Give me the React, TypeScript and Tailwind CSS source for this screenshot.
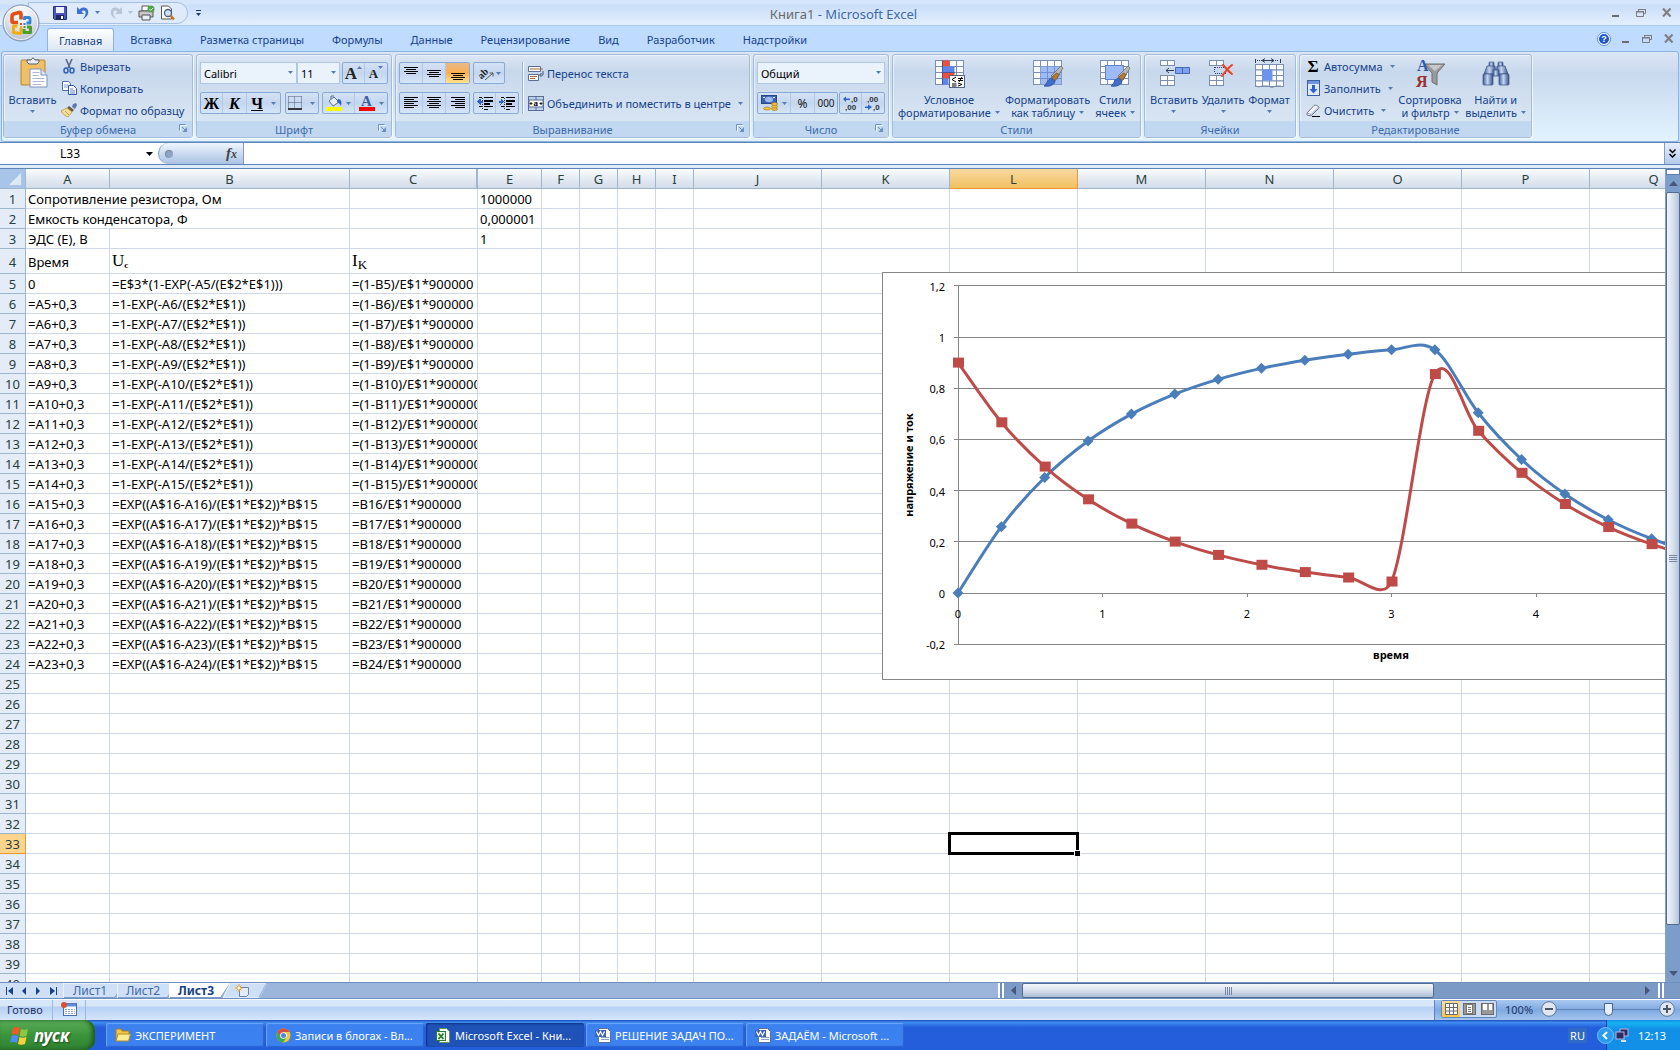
import type { ReactNode } from "react";

const UI = "font-['Noto_Sans',sans-serif]";

/* ---------- small shared pieces ---------- */

function Caret({ className = "" }: { className?: string }) {
  return (
    <svg width="5" height="3" viewBox="0 0 5 3" className={`shrink-0 ${className}`} aria-hidden="true">
      <path d="M0 0h5L2.5 3z" fill="#567db0" />
    </svg>
  );
}

function Brush({ x = 0, y = 0 }: { x?: number; y?: number }) {
  return (
    <g transform={`translate(${x} ${y})`}>
      <path d="M19 0l2 2-7 11-5-3z" fill="#b9b9b9" stroke="#6b6b6b" strokeWidth=".8" />
      <path d="M14.5 7l3 1.5-4 6-4-3z" fill="#b07a3a" stroke="#6f4a1c" strokeWidth=".7" />
      <path d="M9 12l4 3c-1 4-5 6-11 5 3-2 3-6 7-8z" fill="#3f6fc6" stroke="#28509c" strokeWidth=".8" />
    </g>
  );
}

function Cells({ x, y, cols, rows, w, h, stroke = "#7b8fb0" }: { x: number; y: number; cols: number; rows: number; w: number; h: number; stroke?: string }) {
  return (
    <g>
      {Array.from({ length: cols * rows }, (_, i) => (
        <rect key={i} x={x + (i % cols) * w} y={y + Math.floor(i / cols) * h} width={w} height={h} fill="#fbfcff" stroke={stroke} />
      ))}
    </g>
  );
}

/* ---------- icons ---------- */

const OfficeIcon = () => (
  <svg width="38" height="38" viewBox="0 0 38 38" aria-hidden="true">
    <defs>
      <radialGradient id="orb" cx=".5" cy=".25" r=".8">
        <stop offset="0" stopColor="#ffffff" />
        <stop offset=".55" stopColor="#dcdfe6" />
        <stop offset="1" stopColor="#aeb9c9" />
      </radialGradient>
    </defs>
    <circle cx="19" cy="19" r="18" fill="url(#orb)" stroke="#7d93b3" />
    <circle cx="19" cy="19" r="16.5" fill="none" stroke="#fff" strokeOpacity=".7" />
    <g fill="none" strokeLinejoin="round">
      <path d="M16 18.500h-4.500q-1.500 0-1.500-1.500v-5q0-1.500 1.500-2l5.500-1.500q2-.5 2 1.500v5.500" stroke="#e04f14" strokeWidth="3.600" />
      <path d="M22.500 16v-2.500h4q1.500 0 1.500 1.500v4h-3.500" stroke="#2f86d8" strokeWidth="2.800" />
      <path d="M15.500 22h-4v6.500q4 1 7.500.5v-5" stroke="#f2ae10" strokeWidth="3" />
      <path d="M22 25v3.500h6.500V23H25" stroke="#4b9f2f" strokeWidth="3" />
    </g>
    <g>
      <rect x="18" y="19" width="2" height="2" fill="#e04f14" />
      <rect x="21.500" y="19" width="2" height="2" fill="#2f86d8" />
      <rect x="18" y="22" width="2" height="2" fill="#f2ae10" />
      <rect x="21.500" y="22" width="2" height="2" fill="#4b9f2f" />
    </g>
  </svg>
);

const SaveIcon = () => (
  <svg width="14" height="14" viewBox="0 0 14 14" aria-hidden="true">
    <path d="M.5.5h13v13h-12l-1-1z" fill="#4956c0" stroke="#262f85" />
    <rect x="3" y="1" width="8" height="6" fill="#eef2fd" />
    <rect x="3" y="9" width="8" height="5" fill="#1f275f" />
    <rect x="8" y="10" width="2" height="3" fill="#fff" />
  </svg>
);

const UndoIcon = ({ color = "#3c6fd0" }: { color?: string }) => (
  <svg width="14" height="14" viewBox="0 0 14 14" aria-hidden="true">
    <path d="M1 1v7h7L5.500 5.500C8 3.500 10.500 5 9.500 8 9 10 8 11.500 7 13c4-2 6-5 5-8.500C11 1 6.500.5 3.500 3.500z" fill={color} />
  </svg>
);

const PrintIcon = () => (
  <svg width="17" height="16" viewBox="0 0 17 16" aria-hidden="true">
    <path d="M4 1h7v5H4z" fill="#fff" stroke="#555" />
    <path d="M1 6h14v6H1z" fill="#c9c9c9" stroke="#555" />
    <path d="M4 10h8v5H4z" fill="#e9eefb" stroke="#555" />
    <circle cx="13" cy="4" r="3.500" fill="#4fa545" />
    <path d="M11.500 4l1.200 1.300L15 3" fill="none" stroke="#fff" />
  </svg>
);

const PreviewIcon = () => (
  <svg width="15" height="16" viewBox="0 0 15 16" aria-hidden="true">
    <path d="M1.500 1h7l3 3v10h-10z" fill="#fff" stroke="#555" />
    <circle cx="8" cy="8" r="3.500" fill="#cfe3fa" stroke="#4a6288" strokeWidth="1.300" />
    <path d="M10.500 10.500l3.500 4" stroke="#c07a28" strokeWidth="2.500" />
  </svg>
);

const PasteIcon = () => (
  <svg width="32" height="32" viewBox="0 0 32 32" aria-hidden="true">
    <rect x="4" y="3" width="24" height="25" rx="1" fill="#f1bf65" stroke="#b88432" />
    <path d="M10 5V3h4q2-4 4 0h4v2l-2 2h-8z" fill="#e9edf3" stroke="#555e6b" />
    <path d="M13 12h11l6 6v12H13z" fill="#fff" stroke="#7c91b8" />
    <path d="M24 12v6h6" fill="#dce7f8" stroke="#7c91b8" />
    <path d="M15.500 15.500h7M15.500 18.500h6M15.500 21.500h12M15.500 24.500h12M15.500 27.500h9" stroke="#a9b9d6" />
  </svg>
);

const CutIcon = () => (
  <svg width="14" height="15" viewBox="0 0 14 15" aria-hidden="true">
    <path d="M4 0l4 9M10 0L6 9" stroke="#5b6b86" strokeWidth="1.600" />
    <ellipse cx="4" cy="11.500" rx="2" ry="2.500" fill="none" stroke="#2f62b8" strokeWidth="1.500" />
    <ellipse cx="10" cy="11.500" rx="2" ry="2.500" fill="none" stroke="#2f62b8" strokeWidth="1.500" />
  </svg>
);

const CopyIcon = () => (
  <svg width="15" height="14" viewBox="0 0 15 14" aria-hidden="true">
    <path d="M.5.500h6l2 2v7h-8z" fill="#fff" stroke="#4a6fb5" />
    <path d="M2 4h4M2 6h4" stroke="#7f9dd1" />
    <path d="M6.500 4.500h5l3 3v6h-8z" fill="#fff" stroke="#2f5aa8" />
    <path d="M8 8h3M8 10h5M8 12h5" stroke="#5f84c6" />
  </svg>
);

const PainterIcon = () => (
  <svg width="16" height="14" viewBox="0 0 16 14" aria-hidden="true">
    <path d="M12 1l3-1 1 2-2 4-3-2z" fill="#5b78b5" />
    <path d="M8 3l5 4-2 2-5-4z" fill="#6b5a3b" />
    <path d="M6 5l5 4-4 5C4 13 2 11 0 8z" fill="#f3dc96" stroke="#b98d34" strokeWidth=".7" />
    <path d="M4 8l4 4" stroke="#c9a146" />
  </svg>
);

const LaunchIcon = () => (
  <svg width="9" height="9" viewBox="0 0 9 9" aria-hidden="true">
    <path d="M.5 6.500v-6h6" fill="none" stroke="#6b8fc0" />
    <path d="M3 3l3.500 3.500" stroke="#6b8fc0" />
    <path d="M8 3v5H3.500z" fill="#6b8fc0" />
    <path d="M1.500 7.500v-6h6" fill="none" stroke="#fff" strokeOpacity=".8" />
  </svg>
);

const BordersIcon = () => (
  <svg width="14" height="14" viewBox="0 0 14 14" aria-hidden="true">
    <path d="M.5.500h13M.5 6.500h13M.5.500v12M6.500.500v12M13.500.500v12" stroke="#4c5d7b" strokeDasharray="1 1" />
    <path d="M0 13h14" stroke="#000" strokeWidth="1.500" />
  </svg>
);

const FillIcon = () => (
  <svg width="16" height="16" viewBox="0 0 16 16" aria-hidden="true">
    <path d="M3 6l5-4 5 5-6 4z" fill="#e8eef8" stroke="#5a6f96" />
    <path d="M5 4V1h3" fill="none" stroke="#5a6f96" />
    <path d="M12 4c3 0 4 3 3 7-1-2-2-3-4-4z" fill="#2f62b8" />
    <rect y="12" width="16" height="4" fill="#ffff00" />
  </svg>
);

const FontColorIcon = () => (
  <span className="flex flex-col items-center w-4 leading-[12px]">
    <span className="font-['Liberation_Serif',serif] font-bold text-[15px] text-[#3a5f9f]">A</span>
    <span className="w-4 h-1 bg-[#ff0000]" />
  </span>
);

function LinesIcon({ lines }: { lines: [number, number, number][] }) {
  return (
    <svg width="14" height="14" viewBox="0 0 14 14" aria-hidden="true" shapeRendering="crispEdges">
      {lines.map(([x, y, w]) => (
        <rect key={y} x={x} y={y} width={w} height="1" fill="#000" />
      ))}
    </svg>
  );
}

function IndentIcon({ right = false }: { right?: boolean }) {
  return (
    <svg width="16" height="15" viewBox="0 0 16 15" aria-hidden="true" shapeRendering="crispEdges">
      <path d="M7 1h9v1H7zM7 4h9v2H7zM7 7h6v2H7zM7 10h9v1H7zM2 1h3v1H2zM2 10h3v1H2zM7 13h4v1H7z" fill="#000" />
      <path d="M5 2v12" stroke="#333" strokeDasharray="1 1" />
      <path d={right ? "M5 5.500L1.500 2.500v2H0v2h1.500v2z" : "M0 5.500L3.500 2.500v2H6v2H3.500v2z"} fill="#2f62c8" />
    </svg>
  );
}

const OrientIcon = () => (
  <svg width="16" height="15" viewBox="0 0 16 15" aria-hidden="true">
    <text x="0" y="11" transform="rotate(-45 5 8)" fontFamily="Liberation Serif" fontWeight="bold" fontSize="10" fill="#222">ab</text>
    <path d="M7 14l8-7M11.500 7H15v3.500" fill="none" stroke="#555" />
  </svg>
);

const WrapIcon = () => (
  <svg width="16" height="15" viewBox="0 0 16 15" aria-hidden="true">
    <path d="M.5.500h12v5H.5zM.5 8.500h10v6H.5z" fill="#fff" stroke="#5b6f93" />
    <path d="M2 3h13M2 10.500h7M2 12.500h5" stroke="#a5683c" />
    <path d="M15 5v4h-3M13.500 7l-2 2 2 2" fill="none" stroke="#40587f" />
  </svg>
);

const MergeIcon = () => (
  <svg width="16" height="15" viewBox="0 0 16 15" aria-hidden="true">
    <rect x=".5" y=".5" width="15" height="14" fill="#bcd0ef" stroke="#5b6f93" />
    <path d="M8 0v4M8 11v4" stroke="#5b6f93" />
    <rect x="1" y="4" width="14" height="7" fill="#fff" stroke="#5b6f93" />
    <path d="M1.500 7.500h3M3 6v3M11.500 7.500h3M13 6v3" stroke="#222" />
    <text x="5.500" y="10" fontFamily="Liberation Serif" fontWeight="bold" fontSize="9">a</text>
  </svg>
);

const MoneyIcon = () => (
  <svg width="17" height="16" viewBox="0 0 17 16" aria-hidden="true">
    <rect x=".5" y=".5" width="15" height="8" fill="#3d63b8" stroke="#24448c" />
    <ellipse cx="8" cy="4.500" rx="4" ry="2.700" fill="#9db8ea" />
    <path d="M2 2.500h2M12 2.500h2" stroke="#fff" />
    <g fill="#f1c13a" stroke="#a0741a" strokeWidth=".6">
      <ellipse cx="13.500" cy="14" rx="3" ry="1.500" />
      <ellipse cx="13.500" cy="11.500" rx="3" ry="1.500" />
      <ellipse cx="13.500" cy="9" rx="3" ry="1.500" />
      <ellipse cx="6" cy="13.500" rx="3.500" ry="1.500" />
    </g>
  </svg>
);

function DecimalIcon({ less = false }: { less?: boolean }) {
  return (
    <svg width="18" height="18" viewBox="0 0 18 18" aria-hidden="true" fontFamily="Liberation Sans" fontSize="8" fontWeight="bold" fill="#333">
      <text x={less ? 3 : 9} y="8">{less ? ",00" : ",0"}</text>
      <text x={less ? 9 : 3} y="16">{less ? ",0" : ",00"}</text>
      <path d={less ? "M8 13l-4-2.500v2H1v1.500h3v2z" : "M1 5l3-2.500v2h4V6H4v2z"} fill="#2f62c8" />
    </svg>
  );
}

const CondFormatIcon = () => (
  <svg width="32" height="32" viewBox="0 0 32 32" aria-hidden="true">
    <Cells x={2.5} y={3.5} cols={4} rows={4} w={7} h={6} />
    <path d="M9.500 3.500h7v6h-7zM9.500 15.500h12v6h-12z" fill="#ee4f37" />
    <path d="M9.500 9.500h12v6h-12zM9.500 21.500h6v6h-6z" fill="#5d86ea" />
    <path d="M9.500 3.500v24M9.500 15.500h12" stroke="#3b4f8a" strokeWidth=".8" />
    <rect x="16.500" y="18.500" width="15" height="12" fill="#fff" stroke="#556480" />
    <path d="M23 20l-4 2.500 4 2.500M19 27h4.500M19 29h4.500M25 21.500h5M25 23.500h5M29 20l-3 5M25 26l4 1.500-4 1.500" fill="none" stroke="#000" />
  </svg>
);

const FormatTableIcon = () => (
  <svg width="32" height="32" viewBox="0 0 32 32" aria-hidden="true">
    <Cells x={1.5} y={3.5} cols={4} rows={4} w={7} h={6} />
    <rect x="8.500" y="9.500" width="21" height="18" fill="#8fb0f4" fillOpacity=".85" />
    <path d="M8.500 15.500h21M8.500 21.500h21M15.500 9.500v18M22.500 9.500v18" stroke="#6c8fdc" />
    <Brush x={10} y={9} />
  </svg>
);

const CellStylesIcon = () => (
  <svg width="32" height="32" viewBox="0 0 32 32" aria-hidden="true">
    <Cells x={1.5} y={3.5} cols={4} rows={4} w={7} h={6} />
    <rect x="6.500" y="8.500" width="18" height="14" fill="#9dbbf6" stroke="#5f82cf" />
    <Brush x={10} y={9} />
  </svg>
);

const InsertCellsIcon = () => (
  <svg width="32" height="32" viewBox="0 0 32 32" aria-hidden="true">
    <Cells x={2.5} y={3.5} cols={2} rows={1} w={7} h={5} />
    <Cells x={2.5} y={18.5} cols={2} rows={2} w={7} h={5} />
    <path d="M17.500 10.500h14v6h-14zM24.500 10.500v6" fill="#7fa2f0" stroke="#4568b8" />
    <path d="M16 13.500H8M11 11l-3 2.500 3 2.500" fill="none" stroke="#333e55" />
  </svg>
);

const DeleteCellsIcon = () => (
  <svg width="32" height="32" viewBox="0 0 32 32" aria-hidden="true">
    <Cells x={2.5} y={3.5} cols={2} rows={1} w={7} h={5} />
    <Cells x={2.5} y={18.5} cols={2} rows={2} w={7} h={5} />
    <path d="M8 10.500h12M8 16.500h12M7.500 10v6" stroke="#2d3f78" strokeDasharray="1 1" fill="none" />
    <path d="M16 8c3 3 6 7 9 9M25 8c-4 3-7 7-10 11" stroke="#ef3f20" strokeWidth="2" fill="none" strokeLinecap="round" />
  </svg>
);

const FormatCellsIcon = () => (
  <svg width="32" height="32" viewBox="0 0 32 32" aria-hidden="true">
    <path d="M2.500 2v4M27.500 2v4" stroke="#333e55" />
    <path d="M4 3.500h22" stroke="#333e55" strokeDasharray="1 1" />
    <path d="M10 3.500h10M12 1.500l-3 2 3 2M18 1.500l3 2-3 2" fill="none" stroke="#333e55" />
    <Cells x={2.5} y={7.500} cols={4} rows={4} w={7} h={5.500} />
    <rect x="9.500" y="12.500" width="10" height="11" fill="#6a94f0" />
    <path d="M3 29q3 2 6 0h6q4 3 8 0h5" fill="none" stroke="#7b8fb0" />
  </svg>
);

const FillDownIcon = () => (
  <svg width="13" height="16" viewBox="0 0 13 16" aria-hidden="true">
    <rect x=".5" y=".5" width="12" height="15" fill="#dfe9fb" stroke="#3c5f9f" />
    <rect x="1" y="1" width="11" height="3" fill="#6d95e0" />
    <path d="M5 5h3v4h2.500L6.500 13.500 2.500 9H5z" fill="#2c62cf" />
  </svg>
);

const EraserIcon = () => (
  <svg width="15" height="13" viewBox="0 0 15 13" aria-hidden="true">
    <path d="M1 9L8 1.500q1-1 2.500 0l2 1q1 1 0 2L6 11q-1 1-3 .5l-2-.5z" fill="#f3f5fa" stroke="#6c7790" />
    <path d="M1 9l4 1.500 7-7" fill="none" stroke="#9aa6bd" />
    <path d="M6 12.500h8" stroke="#000" />
  </svg>
);

const SortIcon = () => (
  <svg width="32" height="32" viewBox="0 0 32 32" aria-hidden="true" fontFamily="Liberation Serif" fontWeight="bold">
    <path d="M10 7h21l-8 9v12l-5-3V16z" fill="#9b9b9b" stroke="#6e6e6e" />
    <path d="M14 8h14l-7 6z" fill="#c9c9c9" />
    <text x="3" y="14" fontSize="16" fill="#2f58b0">А</text>
    <text x="2" y="30" fontSize="16" fill="#9b2f2a">Я</text>
  </svg>
);

const FindIcon = () => (
  <svg width="32" height="32" viewBox="0 0 32 32" aria-hidden="true">
    <defs>
      <linearGradient id="lens" x2="1">
        <stop offset="0" stopColor="#3f5f9c" />
        <stop offset=".45" stopColor="#c5d5f0" />
        <stop offset="1" stopColor="#35518b" />
      </linearGradient>
    </defs>
    <g fill="url(#lens)" stroke="#34507f" strokeWidth=".7">
      <rect x="9" y="5" width="5" height="5" rx="1" />
      <rect x="18" y="5" width="5" height="5" rx="1" />
      <path d="M7 9h8l1 8H4z" />
      <path d="M17 9h8l3 8H16z" />
      <rect x="3" y="17" width="10" height="11" rx="1" />
      <rect x="19" y="17" width="10" height="11" rx="1" />
      <rect x="13" y="13" width="6" height="6" />
    </g>
  </svg>
);

/* ---------- ribbon parts ---------- */

function Group({ title, className, launcher = false, children }: { title: string; className: string; launcher?: boolean; children: ReactNode }) {
  return (
    <section className={`flex flex-col shrink-0 rounded-[3px] border border-[#a3bcdb] shadow-[1px_1px_0_#ffffffb0,inset_1px_1px_0_#ffffff80] bg-linear-to-b from-[#dce6f4] from-0% via-[#c8d8ec] via-20% to-[#dde9f5] ${className}`}>
      <div className="flex-1">{children}</div>
      <div className="relative flex items-center justify-center h-4 bg-[#c1d8f0] text-[#3e6aaa]">
        {title}
        {launcher && (
          <button type="button" aria-label={title} className="absolute right-1 top-[3px]">
            <LaunchIcon />
          </button>
        )}
      </div>
    </section>
  );
}

function BigButton({ icon, lines, caret = "below", className = "" }: { icon: ReactNode; lines: string[]; caret?: "below" | "inline"; className?: string }) {
  return (
    <button type="button" className={`flex flex-col items-center shrink-0 pt-[2px] leading-[13px] whitespace-nowrap ${className}`}>
      {icon}
      <span className="pt-1">{lines[0]}</span>
      {caret === "below" ? (
        <Caret className="mt-1" />
      ) : (
        <span className="flex items-center gap-1">
          {lines[1]}
          <Caret />
        </span>
      )}
    </button>
  );
}

function SmallButton({ icon, label, caret = false }: { icon: ReactNode; label: string; caret?: boolean }) {
  return (
    <button type="button" className="flex items-center h-[22px] gap-[3px] whitespace-nowrap">
      <span className="flex justify-center w-4">{icon}</span>
      {label}
      {caret && <Caret className="ml-1" />}
    </button>
  );
}

function Strip({ children }: { children: ReactNode }) {
  return (
    <div className="flex h-[22px] rounded-[2px] border border-[#8aaad6] bg-linear-to-b from-[#d5e2f4] via-[#c3d6ef] to-[#d6e5f8] divide-x divide-[#b4c8e4]">
      {children}
    </div>
  );
}

function StripButton({ className = "w-[23px]", label, children }: { className?: string; label: string; children: ReactNode }) {
  return (
    <button type="button" aria-label={label} className={`flex items-center justify-center gap-1 ${className}`}>
      {children}
    </button>
  );
}

function Combo({ label, value, className }: { label: string; value: string; className: string }) {
  return (
    <div className={`relative h-[22px] ${className}`}>
      <select aria-label={label} className="w-full h-full appearance-none bg-[#eaf2fb] border border-[#b0c7e3] pl-[3px] text-black text-[11px]">
        <option>{value}</option>
      </select>
      <Caret className="absolute right-1 top-[9px] pointer-events-none" />
    </div>
  );
}

function Ribbon() {
  return (
    <div className="flex gap-[3px] mx-px pl-px pt-[2px] pb-[3px] h-[91px] rounded-[3px] border border-[#8db2e3] bg-linear-to-b from-[#dbe6f4] via-[#c9d9ee] via-25% to-[#e2f3ff] text-[#15428b]">
      <Group title="Буфер обмена" className="w-[190px]" launcher>
        <div className="flex">
          <BigButton icon={<PasteIcon />} lines={["Вставить"]} className="w-[57px]" />
          <div className="flex flex-col">
            <SmallButton icon={<CutIcon />} label="Вырезать" />
            <SmallButton icon={<CopyIcon />} label="Копировать" />
            <SmallButton icon={<PainterIcon />} label="Формат по образцу" />
          </div>
        </div>
      </Group>

      <Group title="Шрифт" className="w-[196px]" launcher>
        <div className="flex flex-col gap-2 px-[3px] pt-[7px]">
          <div className="flex">
            <Combo label="Шрифт" value="Calibri" className="w-[97px]" />
            <Combo label="Размер" value="11" className="w-[43px]" />
            <div className="ml-auto font-['Liberation_Serif',serif] font-bold text-[#222]">
              <Strip>
                <StripButton label="Увеличить размер" className="w-[22px] text-[17px]">
                  <span>A</span>
                  <Caret className="rotate-180 -ml-1 mb-3" />
                </StripButton>
                <StripButton label="Уменьшить размер" className="w-[22px] text-[13px]">
                  <span>A</span>
                  <Caret className="-ml-1 mb-3" />
                </StripButton>
              </Strip>
            </div>
          </div>
          <div className="flex justify-between font-['Liberation_Serif',serif] text-[16px] font-bold text-black">
            <Strip>
              <StripButton label="Полужирный" className="w-[22px]">Ж</StripButton>
              <StripButton label="Курсив" className="w-6 italic">К</StripButton>
              <StripButton label="Подчеркнутый" className="w-[33px] gap-2">
                <span className="underline">Ч</span>
                <Caret />
              </StripButton>
            </Strip>
            <Strip>
              <StripButton label="Границы" className="w-8 gap-2">
                <BordersIcon />
                <Caret />
              </StripButton>
            </Strip>
            <Strip>
              <StripButton label="Цвет заливки" className="w-8">
                <FillIcon />
                <Caret />
              </StripButton>
              <StripButton label="Цвет текста" className="w-8">
                <FontColorIcon />
                <Caret />
              </StripButton>
            </Strip>
          </div>
        </div>
      </Group>

      <Group title="Выравнивание" className="w-[355px]" launcher>
        <div className="flex px-[3px] pt-[7px]">
          <div className="flex flex-col gap-2 pr-[3px]">
            <div className="flex gap-[3px]">
              <Strip>
                <StripButton label="По верхнему краю"><LinesIcon lines={[[0, 1, 14], [2, 3, 10], [0, 5, 14], [2, 7, 10]]} /></StripButton>
                <StripButton label="По середине"><LinesIcon lines={[[0, 4, 14], [2, 6, 10], [0, 8, 14], [2, 10, 10]]} /></StripButton>
                <StripButton label="По нижнему краю" className="w-[23px] bg-linear-to-b from-[#e9b987] via-[#fdae4b] to-[#ffe48c]"><LinesIcon lines={[[0, 7, 14], [2, 9, 10], [0, 11, 14], [2, 13, 10]]} /></StripButton>
              </Strip>
              <Strip>
                <StripButton label="Ориентация" className="w-[30px] gap-[2px]">
                  <OrientIcon />
                  <Caret />
                </StripButton>
              </Strip>
            </div>
            <div className="flex gap-[3px]">
              <Strip>
                <StripButton label="По левому краю"><LinesIcon lines={[[0, 1, 14], [0, 3, 10], [0, 5, 14], [0, 7, 10], [0, 9, 14], [0, 11, 10]]} /></StripButton>
                <StripButton label="По центру"><LinesIcon lines={[[0, 1, 14], [2, 3, 10], [0, 5, 14], [2, 7, 10], [0, 9, 14], [2, 11, 10]]} /></StripButton>
                <StripButton label="По правому краю"><LinesIcon lines={[[0, 1, 14], [4, 3, 10], [0, 5, 14], [4, 7, 10], [0, 9, 14], [4, 11, 10]]} /></StripButton>
              </Strip>
              <Strip>
                <StripButton label="Уменьшить отступ" className="w-[22px]"><IndentIcon /></StripButton>
                <StripButton label="Увеличить отступ" className="w-[22px]"><IndentIcon right /></StripButton>
              </Strip>
            </div>
          </div>
          <div className="flex flex-col gap-2 border-l border-[#9ab5d8] pl-[5px] shadow-[inset_1px_0_0_#fff]">
            <SmallButton icon={<WrapIcon />} label="Перенос текста" />
            <SmallButton icon={<MergeIcon />} label="Объединить и поместить в центре" caret />
          </div>
        </div>
      </Group>

      <Group title="Число" className="w-[136px]" launcher>
        <div className="flex flex-col gap-2 px-[3px] pt-[7px]">
          <Combo label="Числовой формат" value="Общий" className="w-full" />
          <div className="flex justify-between">
            <Strip>
              <StripButton label="Финансовый формат" className="w-[33px]">
                <MoneyIcon />
                <Caret />
              </StripButton>
              <StripButton label="Процентный формат" className="w-6 text-[12px] text-[#222]">%</StripButton>
              <StripButton label="Формат с разделителями" className="w-[22px] text-[10px] text-[#222]">000</StripButton>
            </Strip>
            <Strip>
              <StripButton label="Увеличить разрядность" className="w-[22px]"><DecimalIcon /></StripButton>
              <StripButton label="Уменьшить разрядность" className="w-[22px]"><DecimalIcon less /></StripButton>
            </Strip>
          </div>
        </div>
      </Group>

      <Group title="Стили" className="w-[249px]">
        <div className="flex justify-between px-[5px]">
          <BigButton icon={<CondFormatIcon />} lines={["Условное", "форматирование"]} caret="inline" />
          <BigButton icon={<FormatTableIcon />} lines={["Форматировать", "как таблицу"]} caret="inline" />
          <BigButton icon={<CellStylesIcon />} lines={["Стили", "ячеек"]} caret="inline" />
        </div>
      </Group>

      <Group title="Ячейки" className="w-[152px]">
        <div className="flex justify-between px-[5px]">
          <BigButton icon={<InsertCellsIcon />} lines={["Вставить"]} />
          <BigButton icon={<DeleteCellsIcon />} lines={["Удалить"]} />
          <BigButton icon={<FormatCellsIcon />} lines={["Формат"]} />
        </div>
      </Group>

      <Group title="Редактирование" className="w-[233px]">
        <div className="flex justify-between px-[5px]">
          <div className="flex flex-col">
            <SmallButton icon={<span className="font-['Liberation_Serif',serif] font-bold text-[17px] text-black">Σ</span>} label="Автосумма" caret />
            <SmallButton icon={<FillDownIcon />} label="Заполнить" caret />
            <SmallButton icon={<EraserIcon />} label="Очистить" caret />
          </div>
          <BigButton icon={<SortIcon />} lines={["Сортировка", "и фильтр"]} caret="inline" />
          <BigButton icon={<FindIcon />} lines={["Найти и", "выделить"]} caret="inline" />
        </div>
      </Group>
    </div>
  );
}

function WindowButtons({ className }: { className: string }) {
  return (
    <div className={`flex items-center ${className}`}>
      <button type="button" aria-label="Свернуть">
        <svg width="9" height="9" viewBox="0 0 9 9"><path d="M1 7h7v2H1z" fill="#6c6c70" /></svg>
      </button>
      <button type="button" aria-label="Восстановить">
        <svg width="10" height="9" viewBox="0 0 10 9"><path d="M2.500 3V1.500h7v4H8M.5 3.500h7v5h-7z" fill="none" stroke="#7b7b80" /><path d="M0 3h8v1.500H0zM2 1h8v1H2z" fill="#7b7b80" /></svg>
      </button>
      <button type="button" aria-label="Закрыть">
        <svg width="10" height="9" viewBox="0 0 10 9"><path d="M1 .5l7.500 8M8.500.5l-7.500 8" stroke="#808085" strokeWidth="2.200" /></svg>
      </button>
    </div>
  );
}

const ribbonTabs = ["Главная", "Вставка", "Разметка страницы", "Формулы", "Данные", "Рецензирование", "Вид", "Разработчик", "Надстройки"];

function Header() {
  return (
    <header className="relative">
      <div className="flex items-center h-[26px] border-b border-[#a9cdee] bg-linear-to-b from-[#d5e5fa] from-15% via-[#cadefa] via-20% to-[#e3effd]">
        <div className="flex items-center gap-[5px] h-[22px] ml-7 pl-6 pr-3 rounded-r-full border border-[#a6c1e4] bg-[#dfeafa]">
          <button type="button" aria-label="Сохранить"><SaveIcon /></button>
          <button type="button" aria-label="Отменить" className="flex items-center gap-[5px] ml-1"><UndoIcon /><Caret /></button>
          <button type="button" aria-label="Вернуть" className="flex items-center gap-[5px] ml-1 opacity-70"><span className="-scale-x-100"><UndoIcon color="#a9b4c6" /></span><Caret className="opacity-50" /></button>
          <button type="button" aria-label="Печать"><PrintIcon /></button>
          <button type="button" aria-label="Предварительный просмотр"><PreviewIcon /></button>
        </div>
        <button type="button" aria-label="Настройка панели" className="ml-2">
          <svg width="5" height="6" viewBox="0 0 5 6"><path d="M0 0h5v1H0zM0 3h5L2.500 6z" fill="#1e3d78" /></svg>
        </button>
        <h1 className="flex-1 pt-[3px] text-center text-[13px] text-[#3e6aaa]">
          <span className="text-[#696969]">Книга1</span> - Microsoft Excel
        </h1>
        <div className="w-[194px]"><WindowButtons className="justify-end gap-4 pr-2" /></div>
      </div>
      <nav className="flex items-end h-[25px] bg-[#bfdbff] pl-[47px]">
        <div className="flex gap-1 text-[#15428b]">
          {ribbonTabs.map((t, i) => (
            <button
              key={t}
              type="button"
              className={i === 0 ? "h-[23px] px-[11px] rounded-t-[3px] border border-b-0 border-[#8db2e3] bg-linear-to-b from-[#ffffff] to-[#dbe6f4]" : "h-[23px] px-3"}
            >
              {t}
            </button>
          ))}
        </div>
        <div className="flex items-center gap-[10px] ml-auto h-full">
          <button type="button" aria-label="Справка">
            <svg width="14" height="14" viewBox="0 0 14 14">
              <circle cx="7" cy="7" r="6.500" fill="#fff" stroke="#5f8ad0" />
              <circle cx="7" cy="7" r="5" fill="#1c56c8" />
              <text x="7" y="10" textAnchor="middle" fontFamily="Liberation Sans" fontWeight="bold" fontSize="9" fill="#fff">?</text>
            </svg>
          </button>
          <WindowButtons className="gap-3 pr-[6px]" />
        </div>
      </nav>
      <button type="button" aria-label="Кнопка Office" className="absolute left-[2px] top-1">
        <OfficeIcon />
      </button>
    </header>
  );
}

function FormulaBar() {
  return (
    <div className="flex h-[23px] border-y border-[#5f86b6] bg-white text-[12px]">
      <div className="relative flex w-[158px]">
        <input aria-label="Имя ячейки" defaultValue="L33" className="w-full text-center pr-[18px] text-black" />
        <svg width="7" height="4" viewBox="0 0 7 4" className="absolute right-[5px] top-[9px]" aria-hidden="true"><path d="M0 0h7L3.500 4z" /></svg>
      </div>
      <div className="flex items-center justify-between w-[86px] px-[6px] rounded-l-full border-l border-r border-[#7d9cc8] bg-linear-to-b from-[#eff5fd] to-[#a9c2e4]">
        <span className="size-2 rounded-full bg-[#8fa4c4] border-t border-l border-[#75879f]" />
        <button type="button" className="font-['Liberation_Serif',serif] font-bold italic text-[15px] leading-[18px] text-[#444]">
          f<span className="text-[12px]">x</span>
        </button>
      </div>
      <input aria-label="Строка формул" className="flex-1 px-1" />
      <button type="button" aria-label="Развернуть" className="flex items-center justify-center w-4 border-l border-[#7d9cc8] bg-linear-to-b from-[#e6effb] to-[#b4cbea]">
        <svg width="7" height="9" viewBox="0 0 7 9"><path d="M.5.500l3 3 3-3M.5 5l3 3 3-3" fill="none" stroke="#000" strokeWidth="1.500" /></svg>
      </button>
    </div>
  );
}

/* ---------- sheet ---------- */

const columns: [string, number][] = [
  ["A", 84], ["B", 240], ["C", 128], ["E", 64], ["F", 38], ["G", 38], ["H", 38], ["I", 38],
  ["J", 128], ["K", 128], ["L", 128], ["M", 128], ["N", 128], ["O", 128], ["P", 128], ["Q", 128],
];

function cellValue(col: string, row: number): ReactNode {
  if (col === "E") return ["1000000", "0,000001", "1"][row - 1];
  if (row === 1 && col === "A") return "Сопротивление резистора, Ом";
  if (row === 2 && col === "A") return "Емкость конденсатора, Ф";
  if (row === 3 && col === "A") return "ЭДС (Е), В";
  if (row === 4) {
    if (col === "A") return "Время";
    if (col === "B") return <span className="font-['Liberation_Serif',serif] text-[17px] leading-[16px]">U<sub className="text-[9px] font-bold">c</sub></span>;
    if (col === "C") return <span className="font-['Liberation_Serif',serif] text-[17px] leading-[16px]">I<sub className="text-[13px]">K</sub></span>;
  }
  if (row < 5 || row > 24) return null;
  if (col === "A") return row === 5 ? "0" : `=A${row - 1}+0,3`;
  if (col === "B") {
    if (row === 5) return "=E$3*(1-EXP(-A5/(E$2*E$1)))";
    return row < 16 ? `=1-EXP(-A${row}/(E$2*E$1))` : `=EXP((A$16-A${row})/(E$1*E$2))*B$15`;
  }
  if (col === "C") return row < 16 ? `=(1-B${row})/E$1*900000` : `=B${row}/E$1*900000`;
  return null;
}

function Grid() {
  return (
    <table className="table-fixed border-separate border-spacing-0 w-[1718px] text-[13px] leading-[17px] text-black">
      <colgroup>
        <col className="w-[26px]" />
        {columns.map(([name, w]) => (
          <col key={name} style={{ width: w }} />
        ))}
      </colgroup>
      <thead>
        <tr className="text-[#27413e]">
          <th className="h-5 p-0 border-r border-b border-[#9eb6ce] bg-[#a9c4e9]">
            <svg width="25" height="19" viewBox="0 0 25 19" aria-hidden="true"><path d="M21 4v12H9z" fill="#dfe9f5" /></svg>
          </th>
          {columns.map(([name]) => (
            <th
              key={name}
              className={
                name === "L"
                  ? "h-5 p-0 pt-[2px] font-normal border-r border-b border-[#f29536] bg-linear-to-b from-[#f9d99f] to-[#f1c15f]"
                  : name === "C"
                    ? "h-5 p-0 pt-[2px] font-normal border-r-2 border-b border-[#9eb6ce] bg-linear-to-b from-[#f9fcfd] to-[#d3dbe9]"
                    : "h-5 p-0 pt-[2px] font-normal border-r border-b border-[#9eb6ce] bg-linear-to-b from-[#f9fcfd] to-[#d3dbe9]"
              }
            >
              {name}
            </th>
          ))}
        </tr>
      </thead>
      <tbody>
        {Array.from({ length: 40 }, (_, i) => i + 1).map((row) => (
          <tr key={row} className={row === 4 ? "h-[25px]" : "h-5"}>
            <th className={`p-0 pt-[2px] font-normal border-r border-b text-[#27413e] ${row === 33 ? "bg-[#ffd58d] border-[#f29536]" : "bg-[#e4ecf7] border-[#9eb6ce]"}`}>{row}</th>
            {columns.map(([name]) => {
              if (row < 3 && name === "B") return null;
              const active = row === 33 && name === "L";
              return (
                <td
                  key={name}
                  colSpan={row < 3 && name === "A" ? 2 : 1}
                  className={`p-0 pl-[2px] border-r border-b border-[#d0d7e5] whitespace-nowrap ${row === 4 && name !== "A" ? "pt-0" : "pt-[2px]"} ${active ? "relative" : "overflow-hidden"}`}
                >
                  {cellValue(name, row)}
                  {active && (
                    <>
                      <span className="absolute -inset-[2px] border-[3px] border-black" />
                      <span className="absolute -right-1 -bottom-1 size-[7px] bg-black border border-white" />
                    </>
                  )}
                </td>
              );
            })}
          </tr>
        ))}
      </tbody>
    </table>
  );
}

/* ---------- chart ---------- */

type Pt = [number, number];

const px = (t: number) => 76 + t * 144.5;
const py = (v: number) => 321 - v * 256;

const charge: number[] = [];
const current: number[] = [];
for (let n = 0; n <= 18; n++) {
  const full = 1 - Math.exp(-3);
  const u = n <= 10 ? 1 - Math.exp(-0.3 * n) : full * Math.exp(-0.3 * (n - 11));
  charge.push(u);
  current.push(0.9 * (n <= 10 ? 1 - u : u));
}

const toPoints = (values: number[]): Pt[] => values.map((v, n) => [px(n * 0.3), py(v)]);

// smoothed line, handles never longer than half of the segment
function smooth(p: Pt[]) {
  const dist = (a: Pt, b: Pt) => Math.hypot(b[0] - a[0], b[1] - a[1]);
  let d = `M${p[0][0]} ${p[0][1]}`;
  for (let i = 0; i < p.length - 1; i++) {
    const a = p[Math.max(i - 1, 0)];
    const b = p[i];
    const c = p[i + 1];
    const e = p[Math.min(i + 2, p.length - 1)];
    const seg = dist(b, c);
    const k1 = Math.min(1 / 6, seg / 2 / dist(a, c));
    const k2 = Math.min(1 / 6, seg / 2 / dist(b, e));
    d += `C${b[0] + (c[0] - a[0]) * k1} ${b[1] + (c[1] - a[1]) * k1} ${c[0] - (e[0] - b[0]) * k2} ${c[1] - (e[1] - b[1]) * k2} ${c[0]} ${c[1]}`;
  }
  return d;
}

function Chart() {
  const blue = toPoints(charge);
  const red = toPoints(current);
  return (
    <svg width="900" height="408" viewBox="0 0 900 408" className="absolute left-[882px] top-[103px]" fontFamily="Noto Sans, sans-serif" fontSize="11" role="img" aria-label="напряжение и ток">
      <rect x=".5" y=".5" width="1000" height="407" fill="#fff" stroke="#868686" />
      <g stroke="#868686" shapeRendering="crispEdges">
        {[1.2, 1, 0.8, 0.6, 0.4, 0.2, 0, -0.2].map((v) => (
          <line key={v} x1="72" x2="900" y1={py(v)} y2={py(v)} />
        ))}
        <line x1="76.500" x2="76.500" y1={py(1.2)} y2={py(-0.2)} />
        {[0, 1, 2, 3, 4].map((t) => (
          <line key={t} x1={px(t)} x2={px(t)} y1={py(0)} y2={py(0) + 4} />
        ))}
      </g>
      {["1,2", "1", "0,8", "0,6", "0,4", "0,2", "0", "-0,2"].map((label, i) => (
        <text key={label} x="63" y={py(1.2 - i * 0.2) + 5} textAnchor="end">{label}</text>
      ))}
      {[0, 1, 2, 3, 4].map((t) => (
        <text key={t} x={px(t)} y="346" textAnchor="middle">{t}</text>
      ))}
      <text x="509" y="387" textAnchor="middle" fontWeight="bold">время</text>
      <text transform="translate(31 193) rotate(-90)" textAnchor="middle" fontWeight="bold">напряжение и ток</text>
      <path d={smooth(blue)} fill="none" stroke="#4a7ebb" strokeWidth="3" />
      {blue.map(([x, y]) => (
        <path key={x} d={`M${x} ${y - 5.5}l5.500 5.500-5.500 5.500-5.500-5.500z`} fill="#4a7ebb" />
      ))}
      <path d={smooth(red)} fill="none" stroke="#be4b48" strokeWidth="3" />
      {red.map(([x, y]) => (
        <rect key={x} x={x - 5} y={y - 5} width="11" height="10" fill="#be4b48" />
      ))}
    </svg>
  );
}

function VerticalScroll() {
  return (
    <div className="flex flex-col items-center w-[15px] shrink-0 border-l border-[#7ea2d6] bg-[#7c9cc9]">
      <div className="w-full h-[6px] bg-white border border-[#5c7fb0]" />
      <button type="button" aria-label="Вверх" className="flex items-center justify-center h-[17px]">
        <svg width="9" height="5" viewBox="0 0 9 5"><path d="M0 5h9L4.500 0z" fill="#46567a" /></svg>
      </button>
      <div className="flex flex-col items-center justify-center gap-px w-full flex-1 rounded-[2px] border border-[#546b91] bg-linear-to-r from-[#f3f6fa] via-[#d6e0ec] to-[#b3c5dc]">
        <span className="w-2 h-px bg-[#7888a3]" />
        <span className="w-2 h-px bg-[#7888a3]" />
        <span className="w-2 h-px bg-[#7888a3]" />
        <span className="w-2 h-px bg-[#7888a3]" />
      </div>
      <button type="button" aria-label="Вниз" className="flex items-end justify-center h-[57px] pb-[6px]">
        <svg width="9" height="5" viewBox="0 0 9 5"><path d="M0 0h9L4.500 5z" fill="#46567a" /></svg>
      </button>
    </div>
  );
}

/* ---------- bottom bars ---------- */

function SheetTab({ name, active = false, className }: { name?: string; active?: boolean; className: string }) {
  return (
    <button type="button" className={`relative h-[15px] -mr-2 ${className}`} aria-label={name ?? "Вставить лист"}>
      <svg className="absolute inset-0 size-full" viewBox="0 0 60 16" preserveAspectRatio="none" aria-hidden="true">
        <path d={name ? "M0 0h60L50 15q-1 1-2 1H0z" : "M10 0h50L49 16H0z"} fill={active ? "#fff" : "#cfe0f6"} stroke="#fff" />
        <path d={name ? "M59.500 0L50 15.500H1" : "M59.500 0L49 15.500"} fill="none" stroke="#7d9cc8" />
      </svg>
      <span className={active ? "relative font-bold text-[#15428b]" : "relative text-[#3e6aaa]"}>{name}</span>
      {!name && (
        <svg width="15" height="13" viewBox="0 0 15 13" className="absolute left-3 top-px" aria-hidden="true">
          <path d="M4.500 3.500h9v7l-2 2h-7z" fill="#e3edf9" stroke="#6a83ab" />
          <path d="M4 0v8M0 4h8M1.500 1.500l5 5M6.500 1.500l-5 5" stroke="#e69a25" />
          <circle cx="4" cy="4" r="1.500" fill="#fff3c4" />
        </svg>
      )}
    </button>
  );
}

const navIcons: [string, string][] = [
  ["Первый", "M1 0v8H0V0zM7 0v8L2 4z"],
  ["Назад", "M5 0v8L1 4z"],
  ["Вперёд", "M1 0v8l4-4z"],
  ["Последний", "M0 0v8l5-4zM6 0h1v8H6z"],
];

function SheetBar() {
  return (
    <div className="flex h-[17px] border-y border-[#6f8fbf] bg-[#9bb5db] text-[12px] leading-[14px]">
      <div className="flex items-center justify-between w-[63px] px-[6px] bg-[#cfe0f6]">
        {navIcons.map(([label, d]) => (
          <button key={label} type="button" aria-label={label}>
            <svg width="7" height="8" viewBox="0 0 7 8"><path d={d} fill="#15428b" /></svg>
          </button>
        ))}
      </div>
      <div className="flex flex-1">
        <SheetTab name="Лист1" className="w-[62px] pr-4 pl-2" />
        <SheetTab name="Лист2" className="w-[60px] pr-4 pl-2" />
        <SheetTab name="Лист3" active className="w-[62px] pr-3 pl-1" />
        <SheetTab className="w-[44px]" />
      </div>
      <div className="flex items-center w-[682px] bg-[#7b9bc6]">
        <span className="w-[6px] h-full border-x-2 border-white bg-[#6a8fc4]" />
        <button type="button" aria-label="Влево" className="flex justify-center w-[18px]">
          <svg width="5" height="9" viewBox="0 0 5 9"><path d="M5 0v9L0 4.500z" fill="#46567a" /></svg>
        </button>
        <div className="flex items-center justify-center gap-px w-[412px] h-[15px] rounded-[2px] border border-[#546b91] bg-linear-to-b from-[#f6f8fb] via-[#d9e1ec] to-[#aabdd6]">
          <span className="w-px h-2 bg-[#7888a3]" />
          <span className="w-px h-2 bg-[#7888a3]" />
          <span className="w-px h-2 bg-[#7888a3]" />
          <span className="w-px h-2 bg-[#7888a3]" />
        </div>
        <button type="button" aria-label="Вправо" className="ml-auto mr-2">
          <svg width="5" height="9" viewBox="0 0 5 9"><path d="M0 0v9l5-4.500z" fill="#46567a" /></svg>
        </button>
        <span className="w-[6px] h-full border-x-2 border-white bg-[#6a8fc4] mr-4" />
      </div>
    </div>
  );
}

function RoundButton({ label, d }: { label: string; d: string }) {
  return (
    <button type="button" aria-label={label}>
      <svg width="16" height="16" viewBox="0 0 16 16">
        <circle cx="8" cy="8" r="7.300" fill="#dfe6ef" stroke="#5f7596" />
        <path d={d} fill="#4a5568" />
      </svg>
    </button>
  );
}

function StatusBar() {
  return (
    <div className="flex items-stretch h-[21px] border-t border-white bg-linear-to-b from-[#d7e6f9] from-30% via-[#b5d0f4] via-35% to-[#d5e5fa] text-[11px] text-[#1f3566]">
      <span className="flex items-center pb-[2px] pl-[7px] pr-[9px] border-r border-[#9ab8e0]">Готово</span>
      <button type="button" aria-label="Запись макроса" className="flex items-center pb-[2px] px-2 border-r border-[#9ab8e0]">
        <svg width="16" height="14" viewBox="0 0 16 14">
          <rect x="2.500" y="1.500" width="13" height="12" fill="#fff" stroke="#4a6fae" />
          <path d="M3 3h12" stroke="#5c8be0" strokeWidth="3" />
          <path d="M4 7.500h10M4 9.500h10M4 11.500h10" stroke="#8aa3cc" strokeDasharray="2 1" />
          <circle cx="3" cy="3" r="3" fill="#d9512c" />
        </svg>
      </button>
      <div className="flex items-center ml-auto w-[246px] pb-[2px] pl-[6px] pr-[5px] border-l border-[#5c84bd] bg-linear-to-b from-[#a9c8f0] via-[#7fa9e2] to-[#a5c5ee]">
        <div className="flex h-[18px] border border-[#6287bd] rounded-[2px] bg-[#cadcf3]">
          <button type="button" aria-label="Обычный" className="flex items-center justify-center w-[18px] bg-linear-to-b from-[#f8d9a0] to-[#ffc545]">
            <svg width="13" height="12" viewBox="0 0 13 12"><path d="M.5.500h12v11H.5zM.5 4.500h12M.5 8h12M4.500.500v11M8.500.500v11" fill="#fff" stroke="#6b6b6b" /></svg>
          </button>
          <button type="button" aria-label="Разметка" className="flex items-center justify-center w-[18px]">
            <svg width="13" height="12" viewBox="0 0 13 12"><rect x=".5" y=".5" width="12" height="11" fill="#999" stroke="#6b6b6b" /><rect x="3.500" y="1.500" width="6" height="9" fill="#fff" stroke="#777" /><path d="M5 4.500h3M5 6.500h3M5 8.500h3" stroke="#777" /></svg>
          </button>
          <button type="button" aria-label="Страничный" className="flex items-center justify-center w-[18px]">
            <svg width="13" height="12" viewBox="0 0 13 12"><rect x=".5" y=".5" width="12" height="11" fill="#999" stroke="#6b6b6b" /><path d="M2 1h4v6H2zM8 1h3v6H8z" fill="#fff" /></svg>
          </button>
        </div>
        <span className="px-2">100%</span>
        <RoundButton label="Уменьшить" d="M4 7h8v2H4z" />
        <input
          type="range"
          aria-label="Масштаб"
          min="0"
          max="100"
          defaultValue="50"
          className="flex-1 min-w-0 h-4 appearance-none bg-[linear-gradient(#5f82b5,#5f82b5)] bg-size-[100%_1px] bg-center bg-no-repeat [&::-webkit-slider-thumb]:appearance-none [&::-webkit-slider-thumb]:w-[9px] [&::-webkit-slider-thumb]:h-[13px] [&::-webkit-slider-thumb]:bg-[#e6eef9] [&::-webkit-slider-thumb]:border [&::-webkit-slider-thumb]:border-[#456291] [&::-webkit-slider-thumb]:rounded-b-full"
        />
        <RoundButton label="Увеличить" d="M4 7h3V4h2v3h3v2H9v3H7V9H4z" />
      </div>
    </div>
  );
}

const FolderIcon = () => (
  <svg width="16" height="16" viewBox="0 0 16 16" aria-hidden="true">
    <path d="M1 3q0-1 1-1h4l1 2h6q1 0 1 1v8H1z" fill="#f0c64d" stroke="#a97f1b" />
    <path d="M3 7h12.500L13.500 14H1z" fill="#fdeb96" stroke="#b88d22" />
  </svg>
);

const ChromeIcon = () => (
  <svg width="15" height="15" viewBox="0 0 15 15" aria-hidden="true">
    <circle cx="7.500" cy="7.500" r="7" fill="#f6c92b" />
    <path d="M1.400 4A7 7 0 0 1 13.600 4H7.500L4.500 9z" fill="#de4b3b" />
    <path d="M1.400 4A7 7 0 0 0 7 14.500L10.500 9.500H5z" fill="#3fa657" />
    <circle cx="7.500" cy="7.500" r="3.300" fill="#fff" />
    <circle cx="7.500" cy="7.500" r="2.500" fill="#4a86e8" />
  </svg>
);

const ExcelIcon = () => (
  <svg width="14" height="15" viewBox="0 0 14 15" aria-hidden="true">
    <path d="M3.500.500h7l3 3v11h-10z" fill="#fff" stroke="#5f9a5b" />
    <rect x=".5" y="3.500" width="9" height="9" fill="#e7f5e3" stroke="#2c7a33" />
    <path d="M2.500 5.500l5 5.500M7.500 5.500l-5 5.500" stroke="#1f7a2b" strokeWidth="1.800" />
  </svg>
);

const WordIcon = () => (
  <svg width="16" height="16" viewBox="0 0 16 16" aria-hidden="true">
    <path d="M3.500 1.500h9l3 3v11h-12z" fill="#fff" stroke="#5b6fa0" />
    <path d="M6 10.500h8M6 12.500h8" stroke="#8aa3cc" />
    <rect y="3" width="11" height="7" fill="#3f66b5" />
    <path d="M1.500 4.500l2 4 2-4 2 4 2-4" fill="none" stroke="#fff" strokeWidth="1.200" />
  </svg>
);

const tasks: { label: string; icon: ReactNode; active?: boolean }[] = [
  { label: "ЭКСПЕРИМЕНТ", icon: <FolderIcon /> },
  { label: "Записи в блогах - Вл...", icon: <ChromeIcon /> },
  { label: "Microsoft Excel - Кни...", icon: <ExcelIcon />, active: true },
  { label: "РЕШЕНИЕ ЗАДАЧ ПО...", icon: <WordIcon /> },
  { label: "ЗАДАЁМ - Microsoft ...", icon: <WordIcon /> },
];

function Taskbar() {
  return (
    <div className="flex items-stretch h-[30px] shrink-0 bg-linear-to-b from-[#1c4cb8] from-0% via-[#3f8cf0] via-8% to-[#245edb] to-25% text-[11px] text-white">
      <button type="button" className="flex items-center gap-1 w-[95px] pl-[10px] rounded-r-[10px] bg-linear-to-b from-[#5aad5a] via-[#3b953b] to-[#2f8130] shadow-[inset_-3px_0_4px_#1d5c1e]">
        <svg width="20" height="19" viewBox="0 0 20 19" aria-hidden="true">
          <path d="M3 2q3-2 7 0L8.500 9q-3-2-7 0z" fill="#ee5a28" />
          <path d="M11 3q3 1.500 7 0l-1.500 7q-4 1.500-7 0z" fill="#8bc943" />
          <path d="M1.500 10q3-2 7 0L7 17q-4-2-7 0z" fill="#4d8df0" />
          <path d="M9.500 11q3 1.500 7 0L15 18q-4 1.500-7 0z" fill="#fbd236" />
        </svg>
        <span className="text-[17px] font-bold italic [text-shadow:1px_1px_2px_#1d4a1d]">пуск</span>
      </button>
      <div className="flex gap-[2px] pt-[3px] pb-[3px] pl-[11px]">
        {tasks.map(({ label, icon, active }) => (
          <button
            key={label}
            type="button"
            className={`flex items-center gap-1 w-[158px] pl-[9px] rounded-[2px] whitespace-nowrap ${active ? "bg-[#1e52b7] shadow-[inset_1px_1px_2px_#0d3180]" : "bg-[#3c81f0] shadow-[inset_1px_1px_1px_#6ba4fa,inset_-1px_-1px_1px_#2a62cc]"}`}
          >
            <span className="flex justify-center w-4">{icon}</span>
            {label}
          </button>
        ))}
      </div>
      <div className="flex items-center ml-auto">
        <button type="button" className="px-[2px] bg-[#316ac5] mr-[19px]">RU</button>
        <div className="relative flex items-center h-full w-[74px] pl-2 pr-[14px] border-l border-[#1042af] bg-linear-to-b from-[#0f8ee8] via-[#18b4f2] via-10% to-[#1290e8] to-30%">
          <button type="button" aria-label="Показать значки" className="absolute -left-[10px] top-[7px]">
            <svg width="17" height="17" viewBox="0 0 17 17"><circle cx="8.500" cy="8.500" r="8" fill="#2a9bf0" stroke="#6fc4fb" /><path d="M10 5L6.500 8.500 10 12" fill="none" stroke="#fff" strokeWidth="2" /></svg>
          </button>
          <svg width="14" height="15" viewBox="0 0 14 15" aria-hidden="true">
            <rect x="5" y="1" width="8" height="7" fill="#2b2b5e" stroke="#b9b5e0" />
            <path d="M6 13h5" stroke="#ddd" strokeWidth="2" />
            <rect x="1" y="4" width="8" height="7" fill="#2b2b5e" stroke="#b9b5e0" />
          </svg>
          <span className="ml-auto">12:13</span>
        </div>
      </div>
    </div>
  );
}

export default function App() {
  return (
    <div className={`flex flex-col h-screen overflow-hidden bg-[#bfdbff] text-[11px] leading-[15px] ${UI}`}>
      <Header />
      <Ribbon />
      <FormulaBar />
      <div className="h-[4px] shrink-0 bg-[#dfeafb] border-b border-[#5f86b6]" />
      <div className="flex flex-1 min-h-0">
        <main className="relative flex-1 min-w-0 overflow-hidden bg-white">
          <Grid />
          <Chart />
        </main>
        <VerticalScroll />
      </div>
      <SheetBar />
      <StatusBar />
      <Taskbar />
    </div>
  );
}
